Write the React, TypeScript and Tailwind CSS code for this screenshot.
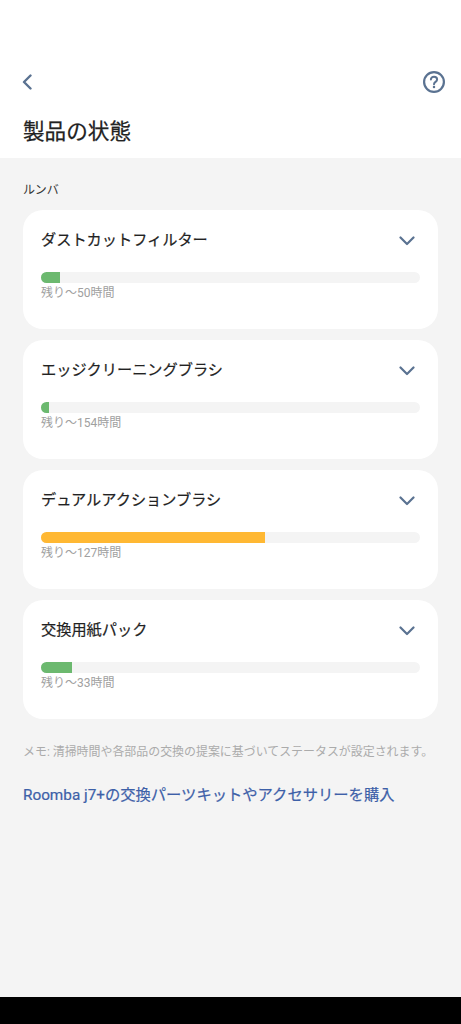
import React from 'react';

const FONT = "font-['Roboto','Noto_Sans_CJK_JP',sans-serif]";

const parts = [
  { name: 'ダストカットフィルター', left: '残り〜50時間', width: 'w-[19px]', color: 'bg-[#6cb96f]' },
  { name: 'エッジクリーニングブラシ', left: '残り〜154時間', width: 'w-[8px]', color: 'bg-[#6cb96f]' },
  { name: 'デュアルアクションブラシ', left: '残り〜127時間', width: 'w-[224px]', color: 'bg-[#ffb833]' },
  { name: '交換用紙パック', left: '残り〜33時間', width: 'w-[31px]', color: 'bg-[#6cb96f]' },
];

const Chevron = () => (
  <svg width="16" height="10" viewBox="0 0 16 10" fill="none" stroke="#5a7291" strokeWidth="2.2" strokeLinecap="round" strokeLinejoin="round">
    <path d="M1.5 1.5 8 8l6.5-6.5" />
  </svg>
);

export default function App() {
  return (
    <div className={`${FONT} w-[461px] h-[1024px] flex flex-col bg-[#f4f4f4] overflow-hidden`}>
      {/* header */}
      <div className="h-[158px] bg-white shrink-0 px-[23px] pt-[71px]">
        <div className="flex justify-between items-center h-[22px]">
          <svg className="-ml-[1px]" width="10" height="16" viewBox="0 0 10 16" fill="none" stroke="#5a7291" strokeWidth="2.4" strokeLinecap="round" strokeLinejoin="round">
            <path d="M8.5 1.5 2 8l6.5 6.5" />
          </svg>
          <svg className="-mr-[7px]" width="22" height="22" viewBox="0 0 22 22" fill="none">
            <circle cx="11" cy="11" r="9.9" stroke="#5a7291" strokeWidth="2.2" />
            <path d="M7.9 8.6C7.9 6.9 9.3 5.8 11 5.8c1.7 0 3.1 1.1 3.1 2.7 0 2.4-3.1 2.4-3.1 4.7" stroke="#5a7291" strokeWidth="2" strokeLinecap="round" />
            <circle cx="11" cy="16" r="1.25" fill="#5a7291" />
          </svg>
        </div>
        <h1 className="mt-[23px] text-[21.6px] leading-[32px] font-normal [-webkit-text-stroke:0.25px_#222] text-[#222]">製品の状態</h1>
      </div>

      {/* body */}
      <div className="flex-1 px-[23px] pt-[24px]">
        <div className="text-[12px] leading-[17px] text-[#333]">ルンバ</div>
        <div className="mt-[11px] flex flex-col gap-[11px] w-[415px]">
          {parts.map(p => (
            <div key={p.name} className="h-[119px] bg-white rounded-[20px] px-[18px] pt-[19px]">
              <div className="flex justify-between items-center h-[22px]">
                <span className="text-[15.2px] leading-[22px] font-normal [-webkit-text-stroke:0.2px_#222] text-[#222]">{p.name}</span>
                <span className="mr-[5px] mt-[2px] flex"><Chevron /></span>
              </div>
              <div className="mt-[21px] h-[11px] w-[379px] rounded-full bg-[#f4f4f4] overflow-hidden">
                <div className={`h-full ${p.width} ${p.color}`} />
              </div>
              <div className="text-[12px] leading-[18px] mt-[1px] text-[#a0a0a0]">{p.left}</div>
            </div>
          ))}
        </div>
        <p className="mt-[24px] text-[11.95px] leading-[18px] text-[#ababab] whitespace-nowrap">
          メモ: 清掃時間や各部品の交換の提案に基づいてステータスが設定されます。
        </p>
        <p className="mt-[23px] text-[15.3px] leading-[22px] font-normal [-webkit-text-stroke:0.2px_#3d60a8] text-[#3d60a8] whitespace-nowrap">
          Roomba j7+の交換パーツキットやアクセサリーを購入
        </p>
      </div>

      {/* system nav bar */}
      <div className="h-[27px] bg-black shrink-0" />
    </div>
  );
}
